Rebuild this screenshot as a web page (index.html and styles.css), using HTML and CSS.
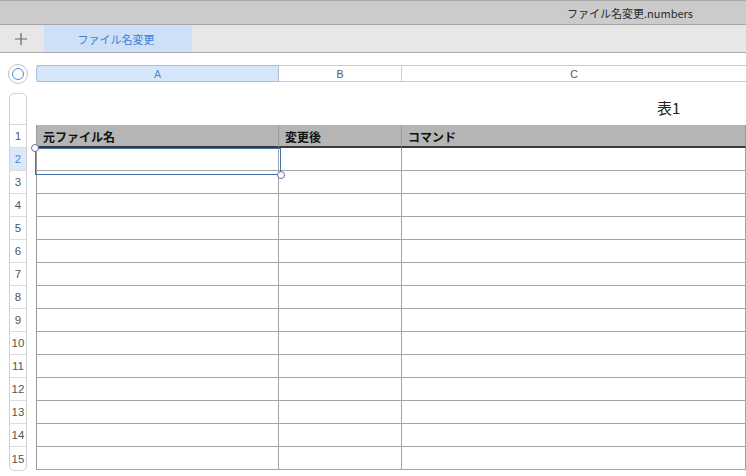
FILE: index.html
```html
<!DOCTYPE html>
<html lang="ja">
<head>
<meta charset="utf-8">
<title>ファイル名変更.numbers</title>
<link rel="stylesheet" href="styles.css">
</head>
<body>
<div class="titlebar"><span class="doc-title">ファイル名変更.numbers</span></div>
<div class="tabbar">
  <div class="add">
    <svg width="14" height="14" viewBox="0 0 14 14"><path d="M7 1v12M1 7h12" stroke="#666" stroke-width="1.2" fill="none"/></svg>
  </div>
  <div class="tab">ファイル名変更</div>
</div>
<div class="sheet">
  <div class="toprow">
    <div class="corner"><span class="ring"><span class="ring-in"></span></span></div>
    <div class="colheads">
      <div class="ch ch-a sel">A</div>
      <div class="ch ch-b">B</div>
      <div class="ch ch-c">C</div>
    </div>
  </div>
  <div class="main">
    <div class="rownums">
      <div class="rn-top"></div>
      <div class="rn">1</div>
      <div class="rn sel">2</div>
      <div class="rn">3</div>
      <div class="rn">4</div>
      <div class="rn">5</div>
      <div class="rn">6</div>
      <div class="rn">7</div>
      <div class="rn">8</div>
      <div class="rn">9</div>
      <div class="rn">10</div>
      <div class="rn">11</div>
      <div class="rn">12</div>
      <div class="rn">13</div>
      <div class="rn">14</div>
      <div class="rn rn-last">15</div>
    </div>
    <div class="tablewrap">
      <div class="caption">表1</div>
      <div class="table">
        <div class="cell head">元ファイル名</div><div class="cell head">変更後</div><div class="cell head">コマンド</div>
        <div class="cell"></div><div class="cell"></div><div class="cell"></div>
        <div class="cell"></div><div class="cell"></div><div class="cell"></div>
        <div class="cell"></div><div class="cell"></div><div class="cell"></div>
        <div class="cell"></div><div class="cell"></div><div class="cell"></div>
        <div class="cell"></div><div class="cell"></div><div class="cell"></div>
        <div class="cell"></div><div class="cell"></div><div class="cell"></div>
        <div class="cell"></div><div class="cell"></div><div class="cell"></div>
        <div class="cell"></div><div class="cell"></div><div class="cell"></div>
        <div class="cell"></div><div class="cell"></div><div class="cell"></div>
        <div class="cell"></div><div class="cell"></div><div class="cell"></div>
        <div class="cell"></div><div class="cell"></div><div class="cell"></div>
        <div class="cell"></div><div class="cell"></div><div class="cell"></div>
        <div class="cell"></div><div class="cell"></div><div class="cell"></div>
        <div class="cell"></div><div class="cell"></div><div class="cell"></div>
      </div>
      <div class="selection">
        <span class="handle h-tl"></span>
        <span class="handle h-br"></span>
      </div>
    </div>
  </div>
</div>
</body>
</html>
```
FILE: styles.css
```css
* { box-sizing: border-box; }
html, body {
  margin: 0;
  padding: 0;
  width: 746px;
  height: 476px;
  overflow: hidden;
  background: #fff;
  font-family: "Noto Sans CJK JP", "Liberation Sans", sans-serif;
}
.titlebar {
  height: 25px;
  background: #cbcbcb;
  border-top: 1px solid #a9a9a9;
  border-bottom: 1px solid #a6a6a6;
  display: flex;
  align-items: center;
  padding-left: 567px;
}
.doc-title {
  font-size: 11px;
  color: #2a2a2a;
  font-family: "Noto Sans CJK JP", "Liberation Sans", sans-serif;
}
.tabbar {
  height: 28px;
  background: #e7e7e7;
  border-bottom: 1px solid #adadad;
  display: flex;
  align-items: stretch;
}
.add {
  width: 44px;
  display: flex;
  align-items: center;
  justify-content: center;
  padding-right: 2px;
}
.tab {
  width: 148px;
  background: #cde0f8;
  color: #3a7fd6;
  font-size: 11px;
  display: flex;
  align-items: center;
  justify-content: center;
  padding-right: 4px;
}
.sheet {
  padding-top: 12px;
  padding-left: 9px;
}
.toprow {
  display: flex;
  align-items: center;
  gap: 9px;
  height: 17px;
}
.corner {
  width: 18px;
  height: 18px;
  display: flex;
  align-items: center;
  justify-content: center;
}
.ring {
  width: 20px;
  height: 20px;
  flex: none;
  border-radius: 50%;
  border: 1px solid #c3c3c3;
  background: #fff;
  display: flex;
  align-items: center;
  justify-content: center;
}
.ring-in {
  width: 12px;
  height: 12px;
  border-radius: 50%;
  border: 1.6px solid #4a90e2;
}
.colheads {
  display: flex;
  flex: 1;
  height: 17px;
  border-top: 1px solid #c9c9c9;
  border-bottom: 1px solid #c9c9c9;
  font-family: "Liberation Sans", sans-serif;
  font-size: 10.5px;
  color: #555;
}
.ch {
  display: flex;
  align-items: center;
  justify-content: center;
  border-right: 1px solid #cfcfcf;
}
.ch-a { width: 243px; flex: none; }
.ch-b { width: 123px; flex: none; }
.ch-c { flex: 1; border-right: none; }
.ch.sel {
  background: #d5e5fa;
  color: #4e8ad6;
  border: 1px solid #a6bfdf;
  border-radius: 4px 0 0 4px;
  margin-top: -1px;
  margin-bottom: -1px;
}
.main {
  display: flex;
  gap: 9px;
  margin-top: 11px;
}
.rownums {
  width: 18px;
  flex: none;
  display: flex;
  flex-direction: column;
  border: 1px solid #d2d2d2;
  border-radius: 5px;
  background: #fff;
  font-family: "Liberation Sans", sans-serif;
  font-size: 11.5px;
  color: #555;
}
.rn-top {
  height: 31px;
  border-bottom: 1px solid #d8d8d8;
}
.rn {
  height: 23px;
  display: flex;
  align-items: center;
  justify-content: center;
  border-bottom: 1px solid #dcdcdc;
}
.rn.sel {
  background: #dbe8fb;
  color: #4a88d8;
}
.rn-last { border-bottom: none; }
.tablewrap {
  position: relative;
  flex: 1;
}
.caption {
  height: 32px;
  padding-left: 621px;
  padding-top: 5px;
  font-size: 15px;
  color: #222;
  line-height: 20px;
}
.table {
  display: grid;
  grid-template-columns: 242px 123px 1fr;
  border-left: 1px solid #9b9b9b;
}
.cell {
  height: 23px;
  border-right: 1px solid #a4a4a4;
  border-bottom: 1px solid #a4a4a4;
}
.cell.head {
  background: #b5b5b5;
  border-right-color: #999;
  border-bottom: 2px solid #3a3a3a;
  font-weight: bold;
  font-size: 12px;
  color: #111;
  display: flex;
  align-items: center;
  padding-left: 6px;
  padding-top: 1px;
}
.selection {
  position: absolute;
  left: -1px;
  top: 55px;
  width: 246px;
  height: 27px;
  border: 1px solid #4573aa;
}
.handle {
  position: absolute;
  width: 8px;
  height: 8px;
  border-radius: 50%;
  background: #fff;
  border: 1px solid #6f6fa9;
}
.h-tl { left: -5px; top: -5px; }
.h-br { right: -5px; bottom: -5px; }
```
